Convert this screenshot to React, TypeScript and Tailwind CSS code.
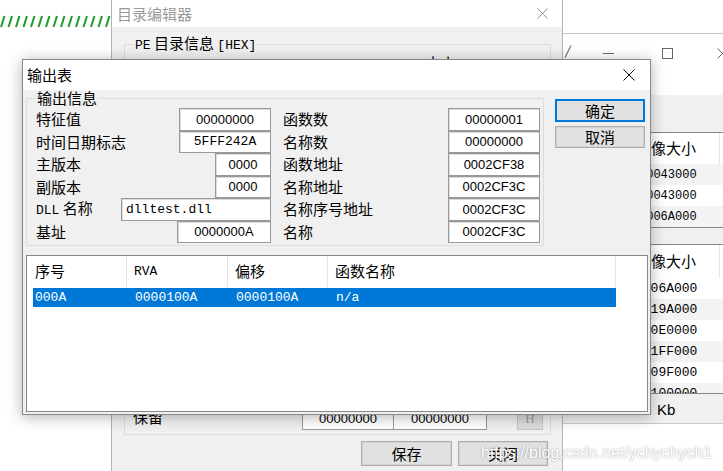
import React from "react";

const cjk = "font-['Noto_Sans_CJK_SC',sans-serif]";
const mono = "font-['Liberation_Mono',monospace]";
const sans = "font-['Liberation_Sans',Arial,sans-serif]";

function CloseIcon({ color, size }: { color: string; size: number }) {
  return (
    <svg width={size} height={size} viewBox="0 0 12 12">
      <path d="M0.5 0.5 L11.5 11.5 M11.5 0.5 L0.5 11.5" stroke={color} strokeWidth="1" fill="none" />
    </svg>
  );
}

type Field = {
  label: React.ReactNode;
  value: string;
  w: string;
  font: string;
  align?: string;
};

const leftFields: Field[] = [
  { label: "特征值", value: "00000000", w: "w-[92px]", font: sans },
  { label: "时间日期标志", value: "5FFF242A", w: "w-[92px]", font: mono },
  { label: "主版本", value: "0000", w: "w-[56px]", font: sans },
  { label: "副版本", value: "0000", w: "w-[56px]", font: sans },
  {
    label: (
      <>
        <span className={`${mono} text-[13px]`}>DLL</span> 名称
      </>
    ),
    value: "dlltest.dll",
    w: "w-[150px]",
    font: mono,
    align: "justify-start pl-[4px]",
  },
  { label: "基址", value: "0000000A", w: "w-[94px]", font: sans },
];

const rightFields: Field[] = [
  { label: "函数数", value: "00000001", w: "w-[92px]", font: sans },
  { label: "名称数", value: "00000000", w: "w-[92px]", font: sans },
  { label: "函数地址", value: "0002CF38", w: "w-[92px]", font: sans },
  { label: "名称地址", value: "0002CF3C", w: "w-[92px]", font: sans },
  { label: "名称序号地址", value: "0002CF3C", w: "w-[92px]", font: sans },
  { label: "名称", value: "0002CF3C", w: "w-[92px]", font: sans },
];

function FieldRow({ f }: { f: Field }) {
  return (
    <div className="h-[22.5px] flex items-center justify-between">
      <span className="text-[15px] leading-[20px]">{f.label}</span>
      <div
        className={`${f.w} h-full flex items-center ${f.align ?? "justify-center"} border border-[#999] bg-white shadow-[inset_1px_1px_0_#dcdcdc] text-[13px] ${f.font}`}
      >
        {f.value}
      </div>
    </div>
  );
}

function Slashes() {
  const xs = Array.from({ length: 15 }, (_, i) => 1 + i * 7.5);
  return (
    <svg width="112" height="16" viewBox="0 0 112 16">
      {xs.map((x, i) => (
        <line key={i} x1={x} y1={13} x2={x + 3.5} y2={2} stroke="#1f9a2a" strokeWidth="2" />
      ))}
    </svg>
  );
}

function ExportDialog() {
  return (
    <div className="absolute left-[22px] top-[59px] w-[629px] h-[356px] border border-[#888] bg-[#f0f0f0] shadow-[0_2px_14px_rgba(0,0,0,0.3)] flex flex-col">
      <div className="h-[30px] bg-white flex items-center justify-between pl-[4px] pr-[15px]">
        <span className="text-[15px] leading-[20px] text-black">输出表</span>
        <CloseIcon color="#111" size={12} />
      </div>
      <div className="flex-1 px-[3px]">
        <div className="flex">
          <fieldset className="w-[518px] h-[156px] border border-[#dcdcdc] pl-[9px] pr-[3px] pt-[2px]">
            <legend className="px-px text-[15px] leading-[16px]">输出信息</legend>
            <div className="grid grid-cols-[235px_257px] gap-x-[12px]">
              <div className="flex flex-col">
                {leftFields.map((f, i) => (
                  <FieldRow key={i} f={f} />
                ))}
              </div>
              <div className="flex flex-col">
                {rightFields.map((f, i) => (
                  <FieldRow key={i} f={f} />
                ))}
              </div>
            </div>
          </fieldset>
          <div className="ml-[11px] mt-[9px] flex flex-col gap-[4px]">
            <button className="w-[90px] h-[23px] border-2 border-[#0078d7] bg-[#e1e1e1] text-[15px] leading-[18px]">
              确定
            </button>
            <button className="w-[90px] h-[22px] border border-[#adadad] shadow-[inset_0_0_0_1px_#d4d4d4] bg-[#e1e1e1] text-[15px] leading-[18px]">
              取消
            </button>
          </div>
        </div>
        <div className="mt-[9px] h-[157px] w-[622px] border border-[#828790] bg-white">
          <div className="flex h-[31px] text-[15px]">
            <div className="w-[100px] border-r border-[#e5e5e5] pl-[8px] flex items-center">序号</div>
            <div className="w-[101px] border-r border-[#e5e5e5] pl-[7px] flex items-center">
              <span className={`${mono} text-[13px]`}>RVA</span>
            </div>
            <div className="w-[100px] border-r border-[#e5e5e5] pl-[7px] flex items-center">偏移</div>
            <div className="w-[288px] border-r border-[#e5e5e5] pl-[7px] flex items-center">函数名称</div>
          </div>
          <div className={`ml-[6px] mt-px w-[583px] h-[19px] bg-[#0078d7] text-white flex items-center pl-[2px] text-[13px] ${mono}`}>
            <span className="w-[100px]">000A</span>
            <span className="w-[101px]">0000100A</span>
            <span className="w-[100px]">0000100A</span>
            <span>n/a</span>
          </div>
        </div>
      </div>
    </div>
  );
}

function DirEditor() {
  return (
    <div className="absolute left-[111px] top-[-1px] w-[452px] h-[500px] border border-[#b4b4b4] bg-[#f0f0f0] flex flex-col">
      <div className="h-[27px] shrink-0 bg-white flex items-center justify-between pl-[5px] pr-[14px]">
        <span className="text-[15px] leading-[20px] text-[#999]">目录编辑器</span>
        <CloseIcon color="#888" size={11} />
      </div>
      <div className="pt-[7px] flex flex-col">
        <fieldset className="ml-[12px] mr-[11px] h-[401px] border border-[#dcdcdc] pl-[8px]">
          <legend className="ml-px px-px leading-[16px]">
            <span className={`${mono} text-[13px]`}>PE</span>
            <span className="text-[15px]"> 目录信息 </span>
            <span className={`${mono} text-[13px]`}>[HEX]</span>
          </legend>
          <div className="h-[376px] flex flex-col justify-between">
            <div className="flex items-start h-[20px]">
              <span className={`${mono} text-[13px] ml-[203px] mt-[3px]`}>RVA</span>
              <span className="text-[15px] leading-[20px] ml-[66px] -mt-[1px]">大小</span>
            </div>
            <div className="flex items-center h-[23px]">
              <span className="w-[169px] text-[15px] leading-[20px] -mt-[4px]">保留</span>
              <div className={`w-[92px] h-full border border-[#999] bg-white flex items-center justify-center text-[13px] ${sans}`}>
                00000000
              </div>
              <div className={`w-[93px] h-full border border-[#999] border-l-0 bg-white flex items-center justify-center text-[13px] ${sans}`}>
                00000000
              </div>
              <div className="ml-[30px] w-[26px] h-full border border-[#c4c4c4] bg-[#dcdcdc] flex items-center justify-center text-[13px] text-[#9a9a9a] font-['Liberation_Serif',serif]">
                H
              </div>
            </div>
          </div>
        </fieldset>
        <div className="mt-[6px] pr-[14px] flex justify-end gap-[6px]">
          <button className="w-[91px] h-[25px] border border-[#adadad] shadow-[inset_0_0_0_1px_#d4d4d4] bg-[#e1e1e1] text-[15px] leading-[18px]">
            保存
          </button>
          <button className="w-[90px] h-[25px] border border-[#adadad] shadow-[inset_0_0_0_1px_#d4d4d4] bg-[#e1e1e1] text-[15px] leading-[18px]">
            关闭
          </button>
        </div>
      </div>
    </div>
  );
}

function SideList({
  rows,
  headerH,
  h,
  firstGray,
  rowText,
}: {
  rows: string[];
  headerH: string;
  h: string;
  firstGray: boolean;
  rowText: string;
}) {
  return (
    <div className={`${h} overflow-hidden border-y border-[#828790] bg-white`}>
      <div className={`${headerH} flex`}>
        <div className="w-[158px] border-r border-[#e5e5e5] pl-[74px] flex items-center text-[15px]">镜像大小</div>
      </div>
      {rows.map((r, i) => (
        <div
          key={i}
          className={`h-[21px] flex items-center ${rowText} ${mono} ${(i % 2 === 0) === firstGray ? "bg-[#f3f3f3]" : "bg-white"}`}
        >
          {r}
        </div>
      ))}
    </div>
  );
}

function RightWindow() {
  return (
    <div className="absolute left-[562px] top-[33px] w-[170px] h-[391px] border-y border-[#c8c8c8] bg-[#f0f0f0] flex flex-col">
      <div className="h-[61px] shrink-0 bg-white flex items-start">
        <svg className="ml-[2px] mt-[11px]" width="8" height="13" viewBox="0 0 8 13">
          <line x1="1" y1="12.5" x2="7" y2="0.5" stroke="#777" strokeWidth="1.2" />
        </svg>
        <div className="ml-[31px] mt-[19px] w-[11px] h-px bg-[#666]" />
        <div className="ml-[48px] mt-[14px] w-[11px] h-[11px] border border-[#666]" />
        <svg className="ml-[44px] mt-[14px]" width="11" height="11" viewBox="0 0 11 11">
          <path d="M0.5 0.5 L10.5 10.5 M10.5 0.5 L0.5 10.5" stroke="#666" fill="none" />
        </svg>
      </div>
      <div className="mt-[37px]">
        <SideList
          rows={["00043000", "00043000", "0006A000"]}
          headerH="h-[31px]"
          h="h-[96px]"
          firstGray={true}
          rowText="pl-[77px] text-[12px]"
        />
      </div>
      <div className="mt-[16px]">
        <SideList
          rows={["0006A000", "0019A000", "000E0000", "001FF000", "0009F000", "00100000"]}
          headerH="h-[33px]"
          h="h-[150px]"
          firstGray={false}
          rowText="pl-[73px] text-[13px]"
        />
      </div>
      <div className={`mt-[6px] h-[20px] pl-[95px] flex items-center text-[15px] ${sans}`}>Kb</div>
    </div>
  );
}

export default function App() {
  return (
    <div className={`relative w-[723px] h-[471px] overflow-hidden bg-white text-black ${cjk}`}>
      <div className="absolute left-0 top-[14px]">
        <Slashes />
      </div>
      <RightWindow />
      <DirEditor />
      <ExportDialog />
      <div
        className={`absolute left-[481px] top-[442px] text-[16px] leading-[22px] text-white [text-shadow:0_0_2px_rgba(0,0,0,0.4)] ${sans}`}
      >
        https://blog.csdn.net/ychychych1
      </div>
    </div>
  );
}
